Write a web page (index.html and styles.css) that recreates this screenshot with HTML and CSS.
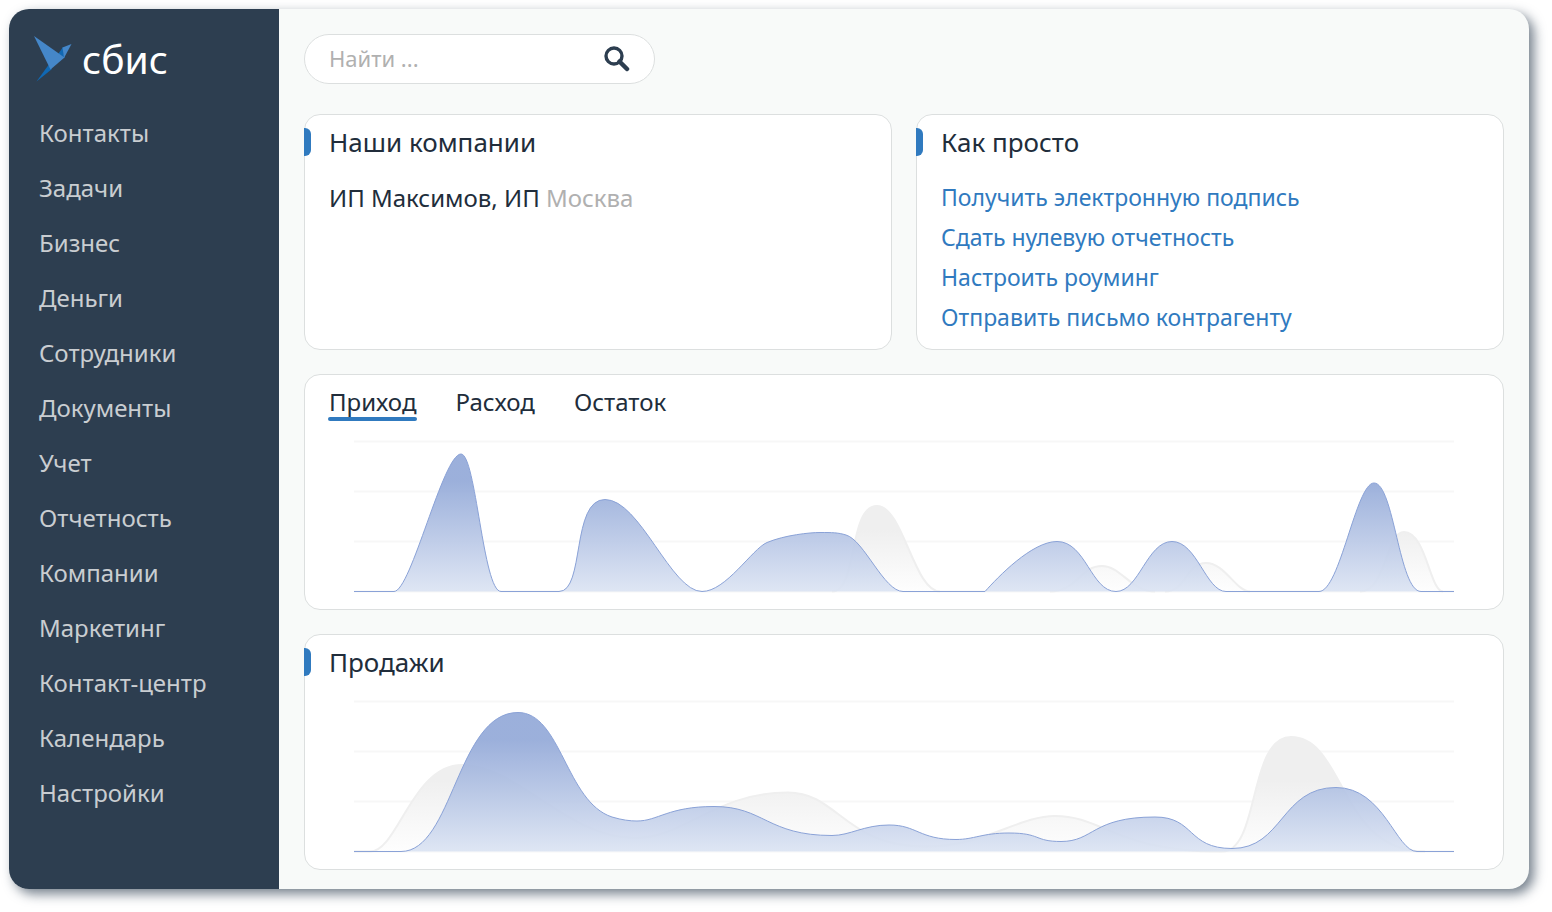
FILE: index.html
```html
<!DOCTYPE html>
<html lang="ru">
<head>
<meta charset="utf-8">
<title>СБИС</title>
<link rel="stylesheet" href="styles.css">
</head>
<body>
<div class="app">
  <aside class="sidebar">
    <a class="logo" href="#">
      <svg class="logo-mark" viewBox="0 0 38 46" aria-hidden="true">
        <path fill="#1068b3" d="M2.500 45.500 14.500 29 18 33z"/>
        <path fill="#1068b3" d="M24.500 17.500 29 11 30.500 22z"/>
        <path fill="#4587c9" d="M28.500 11.500 37.500 8 30 22z"/>
        <path fill="#4587c9" d="M0 0 30.500 21.500 16.500 33.500z"/>
      </svg>
      <span class="logo-text">сбис</span>
    </a>
    <nav class="menu">
      <a href="#">Контакты</a>
      <a href="#">Задачи</a>
      <a href="#">Бизнес</a>
      <a href="#">Деньги</a>
      <a href="#">Сотрудники</a>
      <a href="#">Документы</a>
      <a href="#">Учет</a>
      <a href="#">Отчетность</a>
      <a href="#">Компании</a>
      <a href="#">Маркетинг</a>
      <a href="#">Контакт-центр</a>
      <a href="#">Календарь</a>
      <a href="#">Настройки</a>
    </nav>
  </aside>

  <main class="main">
    <form class="search" role="search">
      <input class="search-input" type="search" placeholder="Найти ..." aria-label="Найти">
      <button class="search-button" type="button" aria-label="Искать">
        <svg viewBox="0 0 26 26" aria-hidden="true">
          <circle cx="10" cy="10" r="8" fill="none" stroke="#2d3e50" stroke-width="3.400"/>
          <path d="M15.500 15.500 23 23" fill="none" stroke="#2d3e50" stroke-width="4.500" stroke-linecap="round"/>
        </svg>
      </button>
    </form>

    <div class="cards">
      <section class="card">
        <h2 class="card-title">Наши компании</h2>
        <p class="company">ИП Максимов, ИП <span class="city">Москва</span></p>
      </section>

      <section class="card">
        <h2 class="card-title">Как просто</h2>
        <ul class="links">
          <li><a href="#">Получить электронную подпись</a></li>
          <li><a href="#">Сдать нулевую отчетность</a></li>
          <li><a href="#">Настроить роуминг</a></li>
          <li><a href="#">Отправить письмо контрагенту</a></li>
        </ul>
      </section>

      <section class="card card-wide">
        <div class="tabs" role="tablist">
          <button class="tab tab-active" type="button" role="tab" aria-selected="true">Приход</button>
          <button class="tab" type="button" role="tab" aria-selected="false">Расход</button>
          <button class="tab" type="button" role="tab" aria-selected="false">Остаток</button>
        </div>
        <svg class="chart" viewBox="354 436 1100 160" role="img" aria-label="Приход">
          <defs>
            <linearGradient id="blue1" gradientUnits="userSpaceOnUse" x1="0" y1="454" x2="0" y2="592">
              <stop offset="0.200" stop-color="#93a9d8" stop-opacity="0.92"/>
              <stop offset="1" stop-color="#dce4f3" stop-opacity="0.92"/>
            </linearGradient>
            <linearGradient id="grey1" gradientUnits="userSpaceOnUse" x1="0" y1="530" x2="0" y2="592">
              <stop offset="0" stop-color="#efefef"/>
              <stop offset="1" stop-color="#fefefe"/>
            </linearGradient>
          </defs>
          <path class="grid" d="M354 441.500H1454M354 491.500H1454M354 541.500H1454M354 591.500H1454"/>
          <path class="past" fill="url(#grey1)" d="M832 591.500C858 591.500 848 506 877 506C903 506 914 591.500 940 591.500M1050 591.500C1077 591.500 1080 566 1102 566C1121 566 1131 591.500 1155 591.500M1165 591.500C1186 591.500 1186 563 1206 563C1225 563 1236 591.500 1250 591.500M1360 591.500C1386 591.500 1386 532 1404 532C1426 532 1430 591.500 1443 591.500"/>
          <path class="now" fill="url(#blue1)" d="M354 591.500H394C411 591.500 443 454 461 454C476 454 483 591.500 501 591.500H559C585 591.500 571 499.500 605 499.500C640 499.500 671 591.500 702 591.500C726 591.500 752 549 767 542.500C785 535 810 532.500 820 532.500C832 532.500 838 532.500 846 535C864 540 884 591.500 903 591.500H985C998 577 1032 541.500 1057 541.500C1086 541.500 1091 591.500 1116 591.500C1139 591.500 1147 541.500 1172 541.500C1197 541.500 1206 591.500 1226 591.500H1319C1340 591.500 1356 483 1374 483C1394 483 1399 591.500 1421 591.500H1454"/>
        </svg>
      </section>

      <section class="card card-wide">
        <h2 class="card-title">Продажи</h2>
        <svg class="chart" viewBox="354 696 1100 160" role="img" aria-label="Продажи">
          <defs>
            <linearGradient id="blue2" gradientUnits="userSpaceOnUse" x1="0" y1="712" x2="0" y2="852">
              <stop offset="0.200" stop-color="#93a9d8" stop-opacity="0.92"/>
              <stop offset="1" stop-color="#dce4f3" stop-opacity="0.92"/>
            </linearGradient>
            <linearGradient id="grey2" gradientUnits="userSpaceOnUse" x1="0" y1="780" x2="0" y2="852">
              <stop offset="0" stop-color="#efefef"/>
              <stop offset="1" stop-color="#fefefe"/>
            </linearGradient>
          </defs>
          <path class="grid" d="M354 701.500H1454M354 751.500H1454M354 801.500H1454M354 851.500H1454"/>
          <path class="past" fill="url(#grey2)" d="M354 851.500H370C398 851.500 412 765 462 765C518 765 567 838 635 838C685 838 715 792.500 788 792.500C838 792.500 845 846.500 925 846.500C985 846.500 1018 816 1055 816C1104 816 1115 851.500 1222 851.500C1260 851.500 1248 737 1291 737C1345 737 1339 851.500 1425 851.500"/>
          <path class="now" fill="url(#blue2)" d="M354 851.500H401C453 851.500 457 712.500 518 712.500C561 712.500 566 802 612 817C622 820 630 821 637 821C658 821 668 806.500 714 806.500C764 806.500 767 835.500 832 835.500C850 835.500 864 825 889 825C917 825 919 839.500 956 839.500C974 839.500 982 833 1009 833C1041 833 1034 841.500 1061 841.500C1094 841.500 1092 817 1155 817C1195 817 1187 848.500 1232 848.500C1283 848.500 1281 787.500 1336 787.500C1384 787.500 1396 851.500 1417 851.500H1454"/>
        </svg>
      </section>
    </div>
  </main>
</div>
</body>
</html>
```
FILE: styles.css
```css
* {
  box-sizing: border-box;
}

body {
  margin: 0;
  padding: 9px 23px 23px 9px;
  min-height: 100vh;
  display: flex;
  background: #fff;
  color: #212d3b;
  font-family: "Noto Sans", "Open Sans", sans-serif;
  font-size: 24px;
  line-height: 40px;
}

a {
  color: inherit;
  text-decoration: none;
}

.app {
  flex: 1;
  display: flex;
  border-radius: 20px;
  overflow: hidden;
  background: #f8faf9;
  box-shadow: 5px 5px 12px 0 rgba(45, 62, 80, 0.65);
}

.sidebar {
  flex: 0 0 270px;
  padding: 20px 25px;
  background: #2d3e50;
  color: #c9cdd1;
}

.logo {
  display: flex;
  align-items: center;
  gap: 10px;
  height: 60px;
  margin-bottom: 16px;
  color: #fff;
}

.logo-mark {
  width: 38px;
  height: 46px;
}

.logo-text {
  font-size: 39px;
}

.menu {
  display: flex;
  flex-direction: column;
  padding-left: 5px;
}

.menu a {
  line-height: 55px;
}

.main {
  flex: 1;
  min-width: 0;
  padding: 25px 25px 19px;
}

.search {
  display: flex;
  align-items: center;
  width: 351px;
  height: 50px;
  margin-bottom: 30px;
  padding: 0 24px;
  border: 1px solid #dcdfdf;
  border-radius: 25px;
  background: #fff;
}

.search-input {
  flex: 1;
  min-width: 0;
  padding: 0 0 3px;
  border: 0;
  outline: 0;
  background: none;
  color: #212d3b;
  font: inherit;
  font-size: 22px;
}

.search-input::placeholder {
  color: #b0b0b0;
  opacity: 1;
}

.search-button {
  display: flex;
  padding: 0;
  border: 0;
  background: none;
}

.search-button svg {
  width: 26px;
  height: 26px;
}

.cards {
  display: grid;
  grid-template-columns: 1fr 1fr;
  gap: 24px;
}

.card {
  min-height: 236px;
  padding: 7px 24px;
  border: 1px solid #dcdfdf;
  border-radius: 16px;
  background: #fff;
}

.card-wide {
  grid-column: 1 / -1;
}

.card-title {
  position: relative;
  margin: 0;
  font-size: 26px;
  font-weight: 400;
}

.card-title::before {
  content: "";
  position: absolute;
  left: -25px;
  top: 6px;
  width: 7px;
  height: 28px;
  border-radius: 0 6px 6px 0;
  background: #307abf;
}

.company {
  margin: 16px 0 0;
}

.city {
  color: #b0b0b0;
}

.links {
  margin: 15px 0 0;
  padding: 0;
  list-style: none;
  color: #307abf;
  font-size: 23px;
}

.tabs {
  display: flex;
  gap: 39px;
  height: 40px;
}

.tab {
  position: relative;
  padding: 0;
  border: 0;
  background: none;
  color: inherit;
  font: inherit;
}

.tab-active::after {
  content: "";
  position: absolute;
  left: -1px;
  right: -1px;
  bottom: 1px;
  height: 4px;
  border-radius: 2px;
  background: #307abf;
}

.chart {
  display: block;
  width: calc(100% - 50px);
  margin: 14px 25px 0;
}

.grid {
  fill: none;
  stroke: #f7f7f7;
  stroke-width: 2;
}

.past {
  stroke: #efefef;
  stroke-width: 2;
}

.now {
  stroke: #8aa2d7;
  stroke-width: 1;
}
```
